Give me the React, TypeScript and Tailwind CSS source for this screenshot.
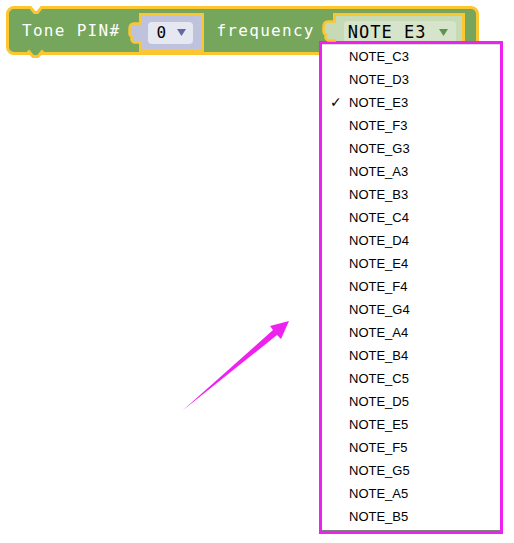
import React from "react";

const notes = [
  "NOTE_C3", "NOTE_D3", "NOTE_E3", "NOTE_F3", "NOTE_G3", "NOTE_A3", "NOTE_B3",
  "NOTE_C4", "NOTE_D4", "NOTE_E4", "NOTE_F4", "NOTE_G4", "NOTE_A4", "NOTE_B4",
  "NOTE_C5", "NOTE_D5", "NOTE_E5", "NOTE_F5", "NOTE_G5", "NOTE_A5", "NOTE_B5",
];

const mono = "font-['DejaVu_Sans_Mono',monospace]";

const Tab = ({ fill }: { fill: string }) => (
  <svg width="14" height="22" viewBox="0 0 14 22" className="relative z-10 -mr-[3px] shrink-0">
    <path
      d="M14,1.5 H6 C3,1.5 1.5,3.5 1.5,7 V12 C1.5,14 3,14.5 4,15 C3,16 3,19.5 6,20.5 H14"
      fill={fill}
      stroke="#fbc630"
      strokeWidth="2.5"
    />
  </svg>
);

const Caret = ({ color }: { color: string }) => (
  <svg width="9" height="7" viewBox="0 0 9 7">
    <path d="M0,0 H9 L4.5,7 Z" fill={color} />
  </svg>
);

const App = () => {
  return (
    <div className="relative w-[514px] h-[543px] bg-white overflow-hidden">
      {/* blockly block */}
      <div className="relative ml-[6px] mt-[6px] w-[473px] h-[49px] border-[3px] border-[#fbc630] bg-[#76a65b] rounded-[8px] flex items-center pl-[13px]">
        <span className={`${mono} text-[16px] tracking-[1.3px] text-white leading-none`}>Tone PIN#</span>

        <div className="flex items-center mt-[4px] h-[39px] ml-[8px]">
          <Tab fill="#bec2dd" />
          <div className="h-[39px] w-[65px] border-[3px] border-[#fbc630] bg-[#bec2dd] flex items-center pl-[6px]">
            <div className="h-[22px] w-[45px] rounded-[4px] bg-[#e5e7f1] flex items-center justify-between pl-[8px] pr-[7px]">
              <span className={`${mono} text-[16px] text-black leading-none`}>0</span>
              <Caret color="#6468a8" />
            </div>
          </div>
        </div>

        <span className={`${mono} ml-[12px] text-[16px] tracking-[1.3px] text-white leading-none`}>frequency</span>

        <div className="flex items-start mt-[4px] h-[39px] ml-[7px]">
          <div className="mt-[7px]">
            <Tab fill="#c6dab6" />
          </div>
          <div className="h-[39px] w-[132px] border-[3px] border-[#fbc630] bg-[#c6dab6] flex items-center pl-[8px]">
            <div className="h-[24px] w-[112px] rounded-[4px] bg-[#d6e4cb] flex items-center justify-between pl-[4px] pr-[8px]">
              <span className={`${mono} text-[17px] tracking-[1px] text-black leading-none`}>NOTE_E3</span>
              <Caret color="#5c944c" />
            </div>
          </div>
        </div>

        {/* top notch */}
        <svg width="22" height="10" viewBox="0 0 22 10" className="absolute left-[16px] -top-[3px]">
          <path d="M0,0 H22 V1 L17,1 L13,6 H9 L5,1 H0 Z" fill="#ffffff" />
          <path d="M0,1.5 H5.5 L9.5,6.5 H12.5 L16.5,1.5 H22" fill="none" stroke="#fbc630" strokeWidth="3" />
        </svg>
        {/* bottom tab */}
        <svg width="22" height="12" viewBox="0 0 22 12" className="absolute left-[16px] top-[40px]">
          <path d="M3,0 L8,6.5 H13 L18,0 Z" fill="#76a65b" />
          <path d="M3,1.5 L8,7.5 H13 L18,1.5" fill="none" stroke="#fbc630" strokeWidth="3" />
        </svg>
      </div>

      {/* dropdown menu */}
      <div className="absolute left-[319px] top-[41px] w-[184px] border-[3px] border-[#ee22ee] bg-white">
        <div className="border-t border-t-[#dcdcdc] border-b border-b-[#808080] pb-[2px]">
          {notes.map((n) => (
            <div key={n} className="relative h-[23px] flex items-center pl-[27px] font-['Liberation_Sans',Arial,sans-serif] text-[13px] text-black">
              {n === "NOTE_E3" && (
                <span className="absolute left-[8px] top-[2px] text-[14px] leading-[18px] text-black font-['DejaVu_Sans',sans-serif]">✓</span>
              )}
              {n}
            </div>
          ))}
        </div>
      </div>

      {/* arrow */}
      <svg width="514" height="543" className="absolute left-0 top-0 pointer-events-none">
        <polygon points="182,411 277,335 281,339 289,321 270,326 273,330" fill="#ee22ee" />
      </svg>
    </div>
  );
};

export default App;
